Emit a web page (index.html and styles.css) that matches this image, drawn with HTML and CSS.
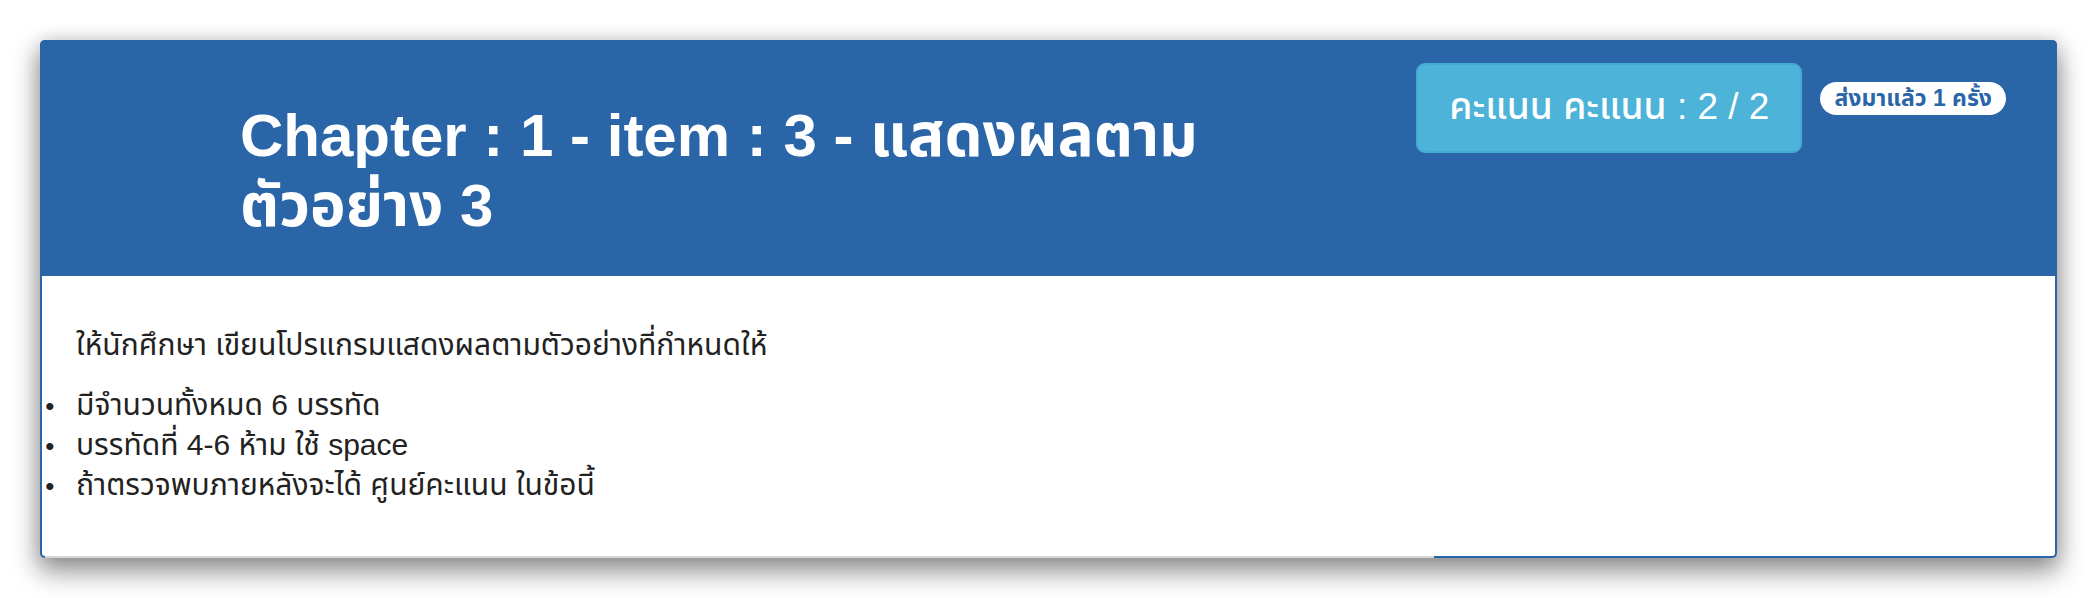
FILE: index.html
```html
<!DOCTYPE html>
<html lang="th">
<head>
<meta charset="utf-8">
<title>Chapter 1 - item 3</title>
<link rel="stylesheet" href="styles.css">
</head>
<body>
  <div class="card">
    <div class="card-header">
      <h1 class="title">Chapter : 1 - item : 3 - แสดงผลตาม ตัวอย่าง 3</h1>
      <div class="score">คะแนน คะแนน : 2 / 2</div>
      <span class="badge">ส่งมาแล้ว 1 ครั้ง</span>
    </div>
    <div class="card-body">
      <p class="lead">ให้นักศึกษา เขียนโปรแกรมแสดงผลตามตัวอย่างที่กำหนดให้</p>
      <ul class="rules">
        <li>มีจำนวนทั้งหมด 6 บรรทัด</li>
        <li>บรรทัดที่ 4-6 ห้าม ใช้ space</li>
        <li>ถ้าตรวจพบภายหลังจะได้ ศูนย์คะแนน ในข้อนี้</li>
      </ul>
    </div>
    <div class="edge-mask"></div>
  </div>
</body>
</html>
```

FILE: styles.css
```css
html, body {
  margin: 0;
  padding: 0;
  background: #ffffff;
}

body {
  padding: 40px 41px 40px 40px;
  font-family: "Liberation Sans", "Noto Sans Thai", "Noto Sans", "DejaVu Sans", sans-serif;
  color: #222222;
}

.card {
  position: relative;
  background: #ffffff;
  border: 2px solid #2a65a8;
  border-top: 0;
  border-radius: 5px;
  box-shadow: 0 12px 26px 2px rgba(0, 0, 0, 0.42), 0 0 18px rgba(0, 0, 0, 0.12);
}

.card-header {
  display: flex;
  align-items: flex-start;
  background: #2a65a8;
  border-radius: 5px 5px 0 0;
  margin: 0 -2px;
  padding: 23px 51px 35px 200px;
}

.title {
  flex: 0 0 960px;
  margin: 38px 0 0 0;
  font-size: 60px;
  line-height: 70px;
  font-weight: 700;
  color: #ffffff;
}

.score {
  margin-left: auto;
  width: 382px;
  height: 86px;
  display: flex;
  align-items: center;
  justify-content: center;
  background: #4db3d8;
  border: 2px solid #47aad2;
  border-radius: 9px;
  color: #ffffff;
  font-size: 37px;
  font-weight: 500;
}

.badge {
  margin: 19px 0 0 18px;
  height: 33px;
  padding: 0 14px;
  display: inline-flex;
  align-items: center;
  background: #ffffff;
  color: #2a65a8;
  border-radius: 17px;
  font-size: 23px;
  font-weight: 700;
  white-space: nowrap;
}

.card-body {
  padding: 49px 34px 51px 34px;
  font-size: 30px;
  line-height: 40px;
}

.lead {
  margin: 0 0 20px 0;
}

.rules {
  margin: 0;
  padding: 0;
  list-style: disc outside;
}

.rules li::marker {
  content: "•\00a0\00a0\00a0";
  font-size: 26px;
}

.edge-mask {
  position: absolute;
  left: 3px;
  bottom: -2px;
  width: 1389px;
  height: 2px;
  background: #d6d6d6;
}
```
